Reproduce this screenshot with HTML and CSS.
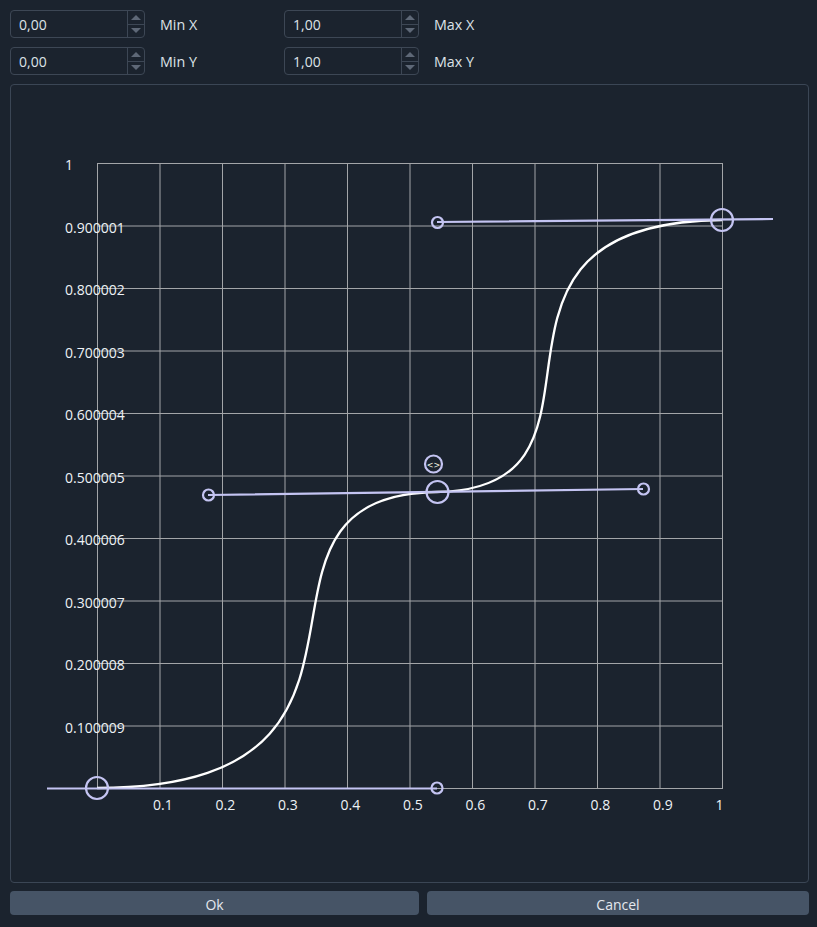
FILE: index.html
```html
<!DOCTYPE html>
<html>
<head>
<meta charset="utf-8">
<link rel="stylesheet" href="styles.css">
</head>
<body>
<div class="dialog">
  <div class="fields">
    <div class="field">
      <div class="spin"><span class="val">0,00</span><span class="arrows"><span class="up"></span><span class="down"></span></span></div>
      <span class="lbl">Min X</span>
    </div>
    <div class="field">
      <div class="spin"><span class="val">1,00</span><span class="arrows"><span class="up"></span><span class="down"></span></span></div>
      <span class="lbl">Max X</span>
    </div>
    <div class="field">
      <div class="spin"><span class="val">0,00</span><span class="arrows"><span class="up"></span><span class="down"></span></span></div>
      <span class="lbl">Min Y</span>
    </div>
    <div class="field">
      <div class="spin"><span class="val">1,00</span><span class="arrows"><span class="up"></span><span class="down"></span></span></div>
      <span class="lbl">Max Y</span>
    </div>
  </div>
  <div class="frame">
    <svg class="plot" width="797" height="797" viewBox="11 85 797 797">
      <g class="grid">
        <path d="M97.5 163V788M160 163V788M222.5 163V788M285 163V788M347.5 163V788M410 163V788M472.5 163V788M535 163V788M597.5 163V788M660 163V788M722.5 163V788"/>
        <path d="M97 163.5H723M97 226H723M97 288.5H723M97 351H723M97 413.5H723M97 476H723M97 538.5H723M97 601H723M97 663.5H723M97 726H723M97 788.5H723"/>
      </g>
      <g class="ylab">
        <text x="65" y="164.5">1</text>
        <text x="65" y="227">0.900001</text>
        <text x="65" y="289.5">0.800002</text>
        <text x="65" y="352">0.700003</text>
        <text x="65" y="414.5">0.600004</text>
        <text x="65" y="477">0.500005</text>
        <text x="65" y="539.5">0.400006</text>
        <text x="65" y="602">0.300007</text>
        <text x="65" y="664.5">0.200008</text>
        <text x="65" y="727">0.100009</text>
      </g>
      <g class="xlab">
        <text x="153" y="810">0.1</text>
        <text x="215.5" y="810">0.2</text>
        <text x="278" y="810">0.3</text>
        <text x="340.5" y="810">0.4</text>
        <text x="403" y="810">0.5</text>
        <text x="465.5" y="810">0.6</text>
        <text x="528" y="810">0.7</text>
        <text x="590.5" y="810">0.8</text>
        <text x="653" y="810">0.9</text>
        <text x="715.5" y="810">1</text>
      </g>
      <path class="curve" d="M97 788C437 788 208 495 437 492C643 489 437 222 722 220"/>
      <g class="handles">
        <path d="M47 788.5H437M208 495L643 489M437 222L773 219"/>
        <circle cx="97" cy="788" r="11"/>
        <circle cx="437" cy="788" r="5.5"/>
        <circle cx="437.5" cy="492" r="11"/>
        <circle cx="208.5" cy="495" r="5.5"/>
        <circle cx="643.5" cy="489" r="5.5"/>
        <circle cx="722" cy="220" r="11"/>
        <circle cx="437.5" cy="222.5" r="5.5"/>
        <circle cx="433.5" cy="464" r="8.5"/>
      </g>
      <text class="arrowlab" x="433.5" y="467.5">&lt;&gt;</text>
    </svg>
  </div>
  <div class="buttons">
    <button class="btn">Ok</button>
    <button class="btn">Cancel</button>
  </div>
</div>
</body>
</html>
```
FILE: styles.css
```css
html, body {
  margin: 0;
  padding: 0;
  background: #1b232e;
}
body {
  font-family: "Segoe UI", "Open Sans", "Noto Sans", sans-serif;
  font-size: 14px;
  color: #dde2e8;
}
.dialog {
  padding: 10px 8px 0 10px;
  display: flex;
  flex-direction: column;
}
.fields {
  display: grid;
  grid-template-columns: 274px auto;
  row-gap: 9px;
}
.field {
  display: flex;
  align-items: center;
}
.spin {
  box-sizing: border-box;
  width: 135px;
  height: 28px;
  border: 1px solid #3d4755;
  border-radius: 4px;
  display: flex;
  align-items: stretch;
}
.val {
  flex: 1;
  padding-left: 8px;
  line-height: 27px;
  color: #dde2e8;
}
.arrows {
  width: 16px;
  border-left: 1px solid #3d4755;
  display: flex;
  flex-direction: column;
}
.up, .down {
  flex: 1;
  display: flex;
  align-items: center;
  justify-content: center;
}
.up {
  border-bottom: 1px solid #3d4755;
}
.up::before {
  content: "";
  border-left: 5px solid transparent;
  border-right: 5px solid transparent;
  border-bottom: 5px solid #5e6877;
}
.down::before {
  content: "";
  border-left: 5px solid transparent;
  border-right: 5px solid transparent;
  border-top: 5px solid #5e6877;
}
.lbl {
  margin-left: 15px;
  font-size: 14.3px;
  color: #dde2e8;
}
.frame {
  margin-top: 9px;
  width: 799px;
  height: 799px;
  box-sizing: border-box;
  border: 1px solid #3b4655;
  border-radius: 4px;
  overflow: hidden;
}
.plot {
  display: block;
}
.grid path {
  stroke: #a3a5a8;
  stroke-width: 1;
  fill: none;
}
.ylab text, .xlab text {
  fill: #eef2f6;
  font-family: "Segoe UI", "Open Sans", "Noto Sans", sans-serif;
  font-size: 14px;
}
.ylab text {
  dominant-baseline: central;
}
.curve {
  fill: none;
  stroke: #ffffff;
  stroke-width: 2.3;
}
.handles path {
  stroke: #c4c4f2;
  stroke-width: 2.2;
  fill: none;
}
.handles circle {
  fill: none;
  stroke: #c4c4f2;
  stroke-width: 2.2;
}
.arrowlab {
  fill: #f4f4e0;
  font-family: "DejaVu Sans", sans-serif;
  font-size: 8px;
  text-anchor: middle;
}
.buttons {
  margin-top: 8px;
  display: grid;
  grid-template-columns: 409px 382px;
  column-gap: 8px;
}
.btn {
  height: 24px;
  border: none;
  border-radius: 4px;
  background: #465466;
  color: #e4e8ee;
  font-family: "Segoe UI", "Open Sans", "Noto Sans", sans-serif;
  font-size: 14px;
  padding: 2px 0 0 0;
}
```
